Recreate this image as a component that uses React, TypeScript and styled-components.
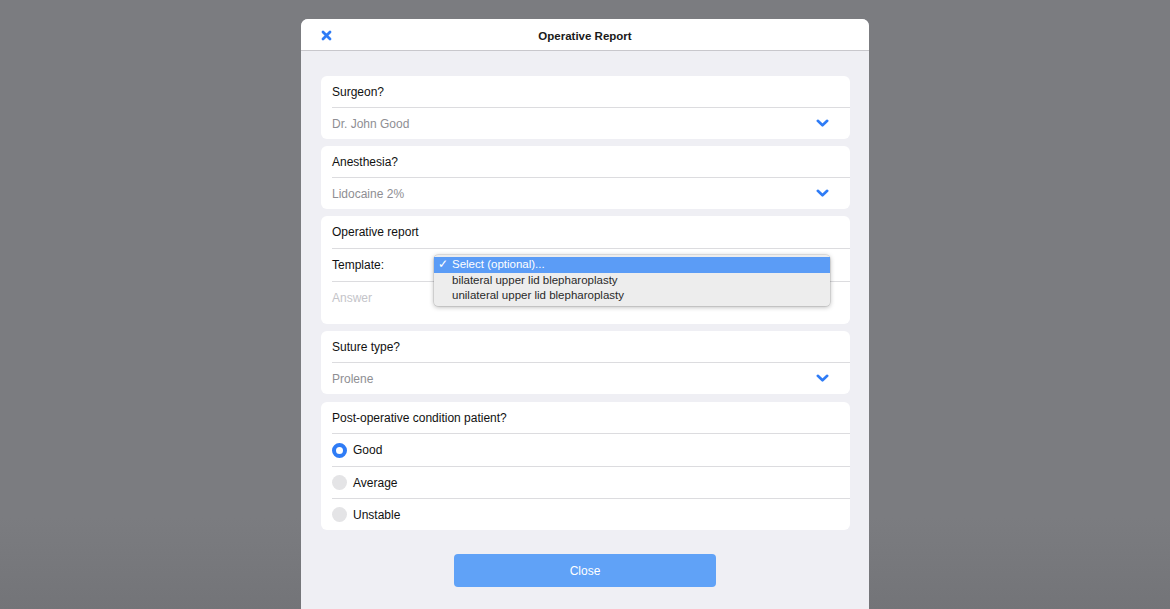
import React from "react";
import styled, { createGlobalStyle } from "styled-components";

const GlobalStyle = createGlobalStyle`
  html, body {
    margin: 0;
    padding: 0;
    height: 609px;
    overflow: hidden;
    background: #7a7b80;
    font-family: "Liberation Sans", Arial, sans-serif;
    font-size: 12px;
  }
`;

const Backdrop = styled.div`
  display: flex;
  justify-content: center;
  height: 609px;
  background: linear-gradient(#7b7c80 85%, #737478);
`;

const Modal = styled.div`
  width: 568px;
  margin-top: 19px;
  height: 620px;
  background: #efeff4;
  border-radius: 7px 7px 0 0;
  overflow: hidden;
  display: flex;
  flex-direction: column;
`;

const Header = styled.div`
  height: 31px;
  flex-shrink: 0;
  background: #fff;
  border-bottom: 1px solid #c8c7cc;
  display: grid;
  grid-template-columns: 60px 1fr 60px;
  align-items: center;
`;

const CloseIcon = styled.button`
  border: 0;
  background: none;
  padding: 1px 0 0 20px;
  display: flex;
  align-items: center;
  cursor: pointer;
`;

const Title = styled.div`
  text-align: center;
  font-weight: bold;
  font-size: 11.5px;
  padding-top: 2px;
  color: #1a1a1a;
`;

const Body = styled.div`
  padding: 25px 19px 0 20px;
  display: flex;
  flex-direction: column;
  gap: 7px;
`;

const Card = styled.div<{ $mt?: number }>`
  background: #fff;
  border-radius: 6px;
  position: relative;
  margin-top: ${({ $mt }) => $mt ?? 0}px;
`;

const Row = styled.div<{ $h?: number }>`
  height: ${({ $h }) => $h ?? 31}px;
  display: flex;
  align-items: center;
  padding: 0 21px 0 11px;
  color: #111;
`;

const Divider = styled.div`
  height: 1px;
  margin-left: 11px;
  background: #dcdcdf;
`;

const Value = styled.span<{ $placeholder?: boolean }>`
  flex: 1;
  color: ${({ $placeholder }) => ($placeholder ? "#c4c4c9" : "#8e8e93")};
`;

const Radio = styled.span<{ $on?: boolean }>`
  width: 15px;
  height: 15px;
  box-sizing: border-box;
  border-radius: 50%;
  margin-right: 6px;
  background: ${({ $on }) => ($on ? "#fff" : "#e4e4e6")};
  border: ${({ $on }) => ($on ? "4px solid #2f7cf6" : "none")};
`;

const Menu = styled.div`
  position: absolute;
  left: 113px;
  top: 39px;
  width: 396px;
  padding: 2px 0 2px;
  background: #ededed;
  border-radius: 4px;
  box-shadow: 0 1px 5px rgba(0, 0, 0, 0.3), 0 0 0 0.5px rgba(0, 0, 0, 0.15);
  z-index: 2;
`;

const MenuItem = styled.div<{ $active?: boolean }>`
  height: 15.5px;
  line-height: 15.5px;
  padding-left: 18px;
  position: relative;
  font-size: 11.5px;
  color: ${({ $active }) => ($active ? "#fff" : "#2a2a2a")};
  background: ${({ $active }) => ($active ? "#5b9cf6" : "transparent")};
`;

const Check = styled.span`
  position: absolute;
  left: 4px;
`;

const Footer = styled.div`
  display: flex;
  justify-content: center;
  padding-top: 24px;
`;

const CloseButton = styled.button`
  width: 262px;
  height: 33px;
  border: 0;
  border-radius: 4px;
  background: #60a2f7;
  color: #fff;
  font-family: "Liberation Sans", Arial, sans-serif;
  font-size: 12px;
`;

const Chevron = () => (
  <svg width="13" height="9" viewBox="0 0 13 9">
    <polyline
      points="1.8,1.8 6.5,6.3 11.2,1.8"
      fill="none"
      stroke="#2f7cf6"
      strokeWidth="2.6"
      strokeLinecap="round"
      strokeLinejoin="round"
    />
  </svg>
);

const XIcon = () => (
  <svg width="11" height="11" viewBox="0 0 11 11">
    <path
      d="M2 2 L9 9 M9 2 L2 9"
      stroke="#2f7cf6"
      strokeWidth="2.8"
      strokeLinecap="round"
    />
  </svg>
);

const SelectCard: React.FC<{ label: string; value: string }> = ({ label, value }) => (
  <Card>
    <Row>{label}</Row>
    <Divider />
    <Row>
      <Value>{value}</Value>
      <Chevron />
    </Row>
  </Card>
);

export default function App() {
  const options = ["Good", "Average", "Unstable"];
  return (
    <>
      <GlobalStyle />
      <Backdrop>
        <Modal>
          <Header>
            <CloseIcon aria-label="Close">
              <XIcon />
            </CloseIcon>
            <Title>Operative Report</Title>
            <span />
          </Header>
          <Body>
            <SelectCard label="Surgeon?" value="Dr. John Good" />
            <SelectCard label="Anesthesia?" value="Lidocaine 2%" />
            <Card>
              <Row $h={32}>Operative report</Row>
              <Divider />
              <Row $h={32}>Template:</Row>
              <Divider />
              <Row $h={31}>
                <Value $placeholder>Answer</Value>
              </Row>
              <Row $h={11} />
              <Menu>
                <MenuItem $active>
                  <Check>✓</Check>Select (optional)...
                </MenuItem>
                <MenuItem>bilateral upper lid blepharoplasty</MenuItem>
                <MenuItem>unilateral upper lid blepharoplasty</MenuItem>
              </Menu>
            </Card>
            <SelectCard label="Suture type?" value="Prolene" />
            <Card $mt={1}>
              <Row>Post-operative condition patient?</Row>
              {options.map((o, i) => (
                <React.Fragment key={o}>
                  <Divider />
                  <Row $h={i === 0 ? 32 : 31}>
                    <Radio $on={i === 0} />
                    {o}
                  </Row>
                </React.Fragment>
              ))}
            </Card>
          </Body>
          <Footer>
            <CloseButton>Close</CloseButton>
          </Footer>
        </Modal>
      </Backdrop>
    </>
  );
}
